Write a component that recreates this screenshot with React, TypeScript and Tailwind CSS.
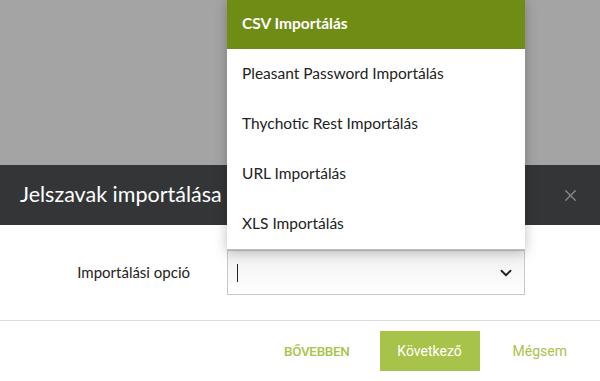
import { ChevronDown, X } from "lucide-react";

const options = [
  "CSV Importálás",
  "Pleasant Password Importálás",
  "Thychotic Rest Importálás",
  "URL Importálás",
  "XLS Importálás",
];

export default function App() {
  return (
    <div className="relative w-[600px] h-[381px] overflow-hidden bg-white font-['Lato','Noto_Sans',sans-serif]">
      <div className="h-[165px] bg-[#a4a4a4]" />

      <div className="flex flex-col">
        <div className="h-[60px] bg-[#333537] flex items-center justify-between pl-5 pr-[20px]">
          <h1 className="text-white text-[21.5px] leading-none">Jelszavak importálása</h1>
          <X className="text-[#8a8c8e]" size={19} strokeWidth={1.5} />
        </div>

        <div className="flex items-center py-[25px]">
          <div className="w-[190px] text-right text-[15px] text-[#222]">Importálási opció</div>
          <div className="ml-[37px] w-[298px] h-[45px] border border-[#c8c8c8] bg-gradient-to-b from-[#f0f0f0] to-white flex items-center justify-between pl-[9px] pr-[9px]">
            <span className="w-px h-[18px] bg-[#222]" />
            <ChevronDown size={18} strokeWidth={2.5} className="text-[#222]" />
          </div>
        </div>

        <div className="border-t border-[#dcdcdc] h-[61px] flex items-center justify-end pr-[33px] font-['Roboto',sans-serif]">
          <button className="text-[13.5px] font-medium text-[#a8c34a] tracking-tight">BŐVEBBEN</button>
          <button className="ml-[30px] w-[100px] h-[40px] bg-[#a8c34a] text-white text-[14px]">Következő</button>
          <button className="ml-[33px] text-[14px] text-[#a8c34a]">Mégsem</button>
        </div>
      </div>

      <ul className="absolute left-[227px] top-[-1px] w-[298px] bg-white border-b border-[#bdbdbd] shadow-[0_2px_12px_rgba(0,0,0,0.25)]">
        {options.map((o, i) => (
          <li
            key={o}
            className={
              i === 0
                ? "h-[50px] flex items-center pl-[15px] bg-[#6f8c15] text-white font-bold text-[15.5px]"
                : "h-[50px] flex items-center pl-[15px] text-[#222] text-[15.5px]"
            }
          >
            {o}
          </li>
        ))}
      </ul>
    </div>
  );
}
